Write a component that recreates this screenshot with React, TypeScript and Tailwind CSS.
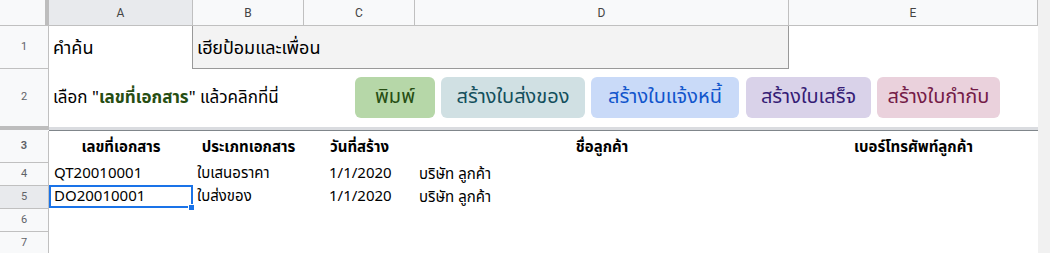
const ROWS = [
  { n: 4, id: 'QT20010001', type: 'ใบเสนอราคา', date: '1/1/2020', customer: 'บริษัท ลูกค้า' },
  { n: 5, id: 'DO20010001', type: 'ใบส่งของ', date: '1/1/2020', customer: 'บริษัท ลูกค้า' },
];

function RowHead({ n, active, className = '' }: { n: number; active?: boolean; className?: string }) {
  return (
    <div className={`w-[49px] shrink-0 flex items-center justify-center border-r border-b border-[#c0c0c0] text-[11px] text-[#5f6368] font-['Roboto',sans-serif] ${
      active ? 'bg-[#e8eaed]' : 'bg-[#f8f9fa]'
    } ${className}`}>
      {n}
    </div>
  );
}

export default function App() {
  return (
    <div className="w-[1050px] h-[253px] flex bg-white overflow-hidden text-black font-['Noto_Sans_Thai','Noto_Sans','Liberation_Sans',sans-serif]">
      <div className="w-[1038px] shrink-0 flex flex-col">
        {/* column headers */}
        <div className="h-[26px] shrink-0 flex border-b border-[#c0c0c0] text-[12px] text-[#444] font-['Roboto',sans-serif]">
          <div className="w-[45px] bg-[#f8f9fa]" />
          <div className="w-[4px] bg-[#bdbdbd]" />
          <div className="w-[144px] flex items-center justify-center bg-[#e8eaed] border-r border-[#c0c0c0]">A</div>
          <div className="w-[111px] flex items-center justify-center bg-[#f8f9fa] border-r border-[#c0c0c0]">B</div>
          <div className="w-[111px] flex items-center justify-center bg-[#f8f9fa] border-r border-[#c0c0c0]">C</div>
          <div className="w-[374px] flex items-center justify-center bg-[#f8f9fa] border-r border-[#c0c0c0]">D</div>
          <div className="w-[249px] flex items-center justify-center bg-[#f8f9fa] border-r border-[#c0c0c0]">E</div>
        </div>

        {/* row 1 */}
        <div className="h-[43px] shrink-0 flex">
          <RowHead n={1} />
          <div className="w-[143px] flex items-center pl-[4px] pt-[2px] text-[18px]">คำค้น</div>
          <div className="w-[597px] flex items-center pl-[4px] pt-[2px] text-[18px] bg-[#f3f3f3] border-l border-r border-b border-[#999]">
            เฮียป้อมและเพื่อน
          </div>
        </div>

        {/* row 2 */}
        <div className="h-[57px] shrink-0 flex">
          <RowHead n={2} className="border-b-0" />
          <div className="w-[306px] flex items-center pl-[4px] pt-[2px] text-[17px] whitespace-nowrap">
            เลือก "<b className="text-[#274e13]">เลขที่เอกสาร</b>" แล้วคลิกที่นี่
          </div>
          <div className="flex items-center gap-[6px] text-[20px] pb-[1px]">
            <div className="w-[80px] h-[41px] rounded-[6px] bg-[#b6d7a8] text-[#274e13] flex items-center justify-center">พิมพ์</div>
            <div className="w-[144px] h-[41px] rounded-[6px] bg-[#d0e0e3] text-[#134f5c] flex items-center justify-center">สร้างใบส่งของ</div>
            <div className="w-[148px] h-[41px] rounded-[6px] bg-[#c9daf8] text-[#1155cc] flex items-center justify-center">สร้างใบแจ้งหนี้</div>
            <div className="w-[125px] h-[41px] rounded-[6px] bg-[#d9d2e9] text-[#351c75] flex items-center justify-center ml-px">สร้างใบเสร็จ</div>
            <div className="w-[123px] h-[41px] rounded-[6px] bg-[#ead1dc] text-[#741b47] flex items-center justify-center">สร้างใบกำกับ</div>
          </div>
        </div>

        {/* freeze bar */}
        <div className="h-[5px] shrink-0 flex">
          <div className="w-[49px] flex flex-col">
            <div className="h-[4px] bg-[#bdbdbd]" />
            <div className="h-[1px] bg-[#f8f9fa]" />
          </div>
          <div className="flex-1 flex flex-col">
            <div className="h-[1px] bg-white" />
            <div className="h-[3px] bg-[#dadce0]" />
            <div className="h-[1px] bg-[#80868b]" />
          </div>
        </div>

        {/* row 3 header */}
        <div className="h-[32px] shrink-0 flex font-bold text-[15px] font-['Liberation_Sans','Noto_Sans_Thai',sans-serif]">
          <RowHead n={3} />
          <div className="w-[144px] flex items-center justify-center">เลขที่เอกสาร</div>
          <div className="w-[111px] flex items-center justify-center">ประเภทเอกสาร</div>
          <div className="w-[111px] flex items-center justify-center">วันที่สร้าง</div>
          <div className="w-[374px] flex items-center justify-center">ชื่อลูกค้า</div>
          <div className="w-[249px] flex items-center justify-center">เบอร์โทรศัพท์ลูกค้า</div>
        </div>

        {ROWS.map(r => (
          <div key={r.n} className="h-[23px] shrink-0 flex text-[15px]">
            <RowHead n={r.n} active={r.n === 5} />
            <div className="relative w-[144px] flex items-center pl-[5px]">
              {r.id}
              {r.n === 5 && (
                <>
                  <div className="absolute left-0 -top-px w-[144px] h-[23px] border-2 border-[#1a73e8]" />
                  <div className="absolute left-[139px] top-[18px] w-[7px] h-[7px] bg-[#1a73e8] border border-white" />
                </>
              )}
            </div>
            <div className="w-[111px] flex items-center pl-[4px]">{r.type}</div>
            <div className="w-[111px] flex items-center pl-[25px]">{r.date}</div>
            <div className="w-[374px] flex items-center pl-[4px] text-[15px] font-['Liberation_Sans','Noto_Sans_Thai',sans-serif]">{r.customer}</div>
          </div>
        ))}

        <div className="h-[23px] shrink-0 flex">
          <RowHead n={6} />
        </div>
        <div className="h-[23px] shrink-0 flex">
          <RowHead n={7} />
        </div>
      </div>
      <div className="flex-1 bg-[#f1f1f1]" />
    </div>
  );
}
